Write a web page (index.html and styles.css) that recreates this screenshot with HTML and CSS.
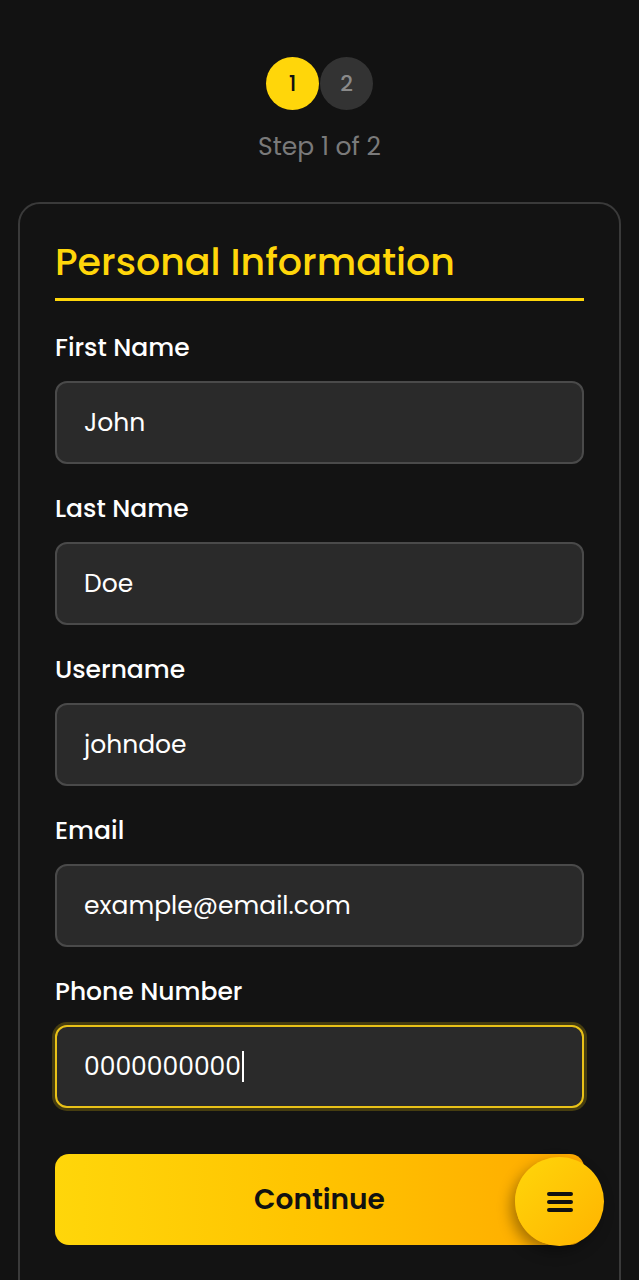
FILE: index.html
```html
<!DOCTYPE html>
<html lang="en">
<head>
<meta charset="utf-8">
<title>Personal Information</title>
<link rel="stylesheet" href="styles.css">
</head>
<body>
<div class="page">
  <div class="stepper">
    <div class="steps">
      <div class="step active">1</div>
      <div class="step">2</div>
    </div>
    <div class="step-label">Step 1 of 2</div>
  </div>
  <section class="card">
    <h1 class="title">Personal Information</h1>
    <div class="field">
      <label class="label">First Name</label>
      <div class="input">John</div>
    </div>
    <div class="field">
      <label class="label">Last Name</label>
      <div class="input">Doe</div>
    </div>
    <div class="field">
      <label class="label">Username</label>
      <div class="input">johndoe</div>
    </div>
    <div class="field">
      <label class="label">Email</label>
      <div class="input">example@email.com</div>
    </div>
    <div class="field">
      <label class="label">Phone Number</label>
      <div class="input focused">0000000000<span class="caret"></span></div>
    </div>
    <div class="actions">
      <button class="continue">Continue</button>
      <button class="fab" aria-label="Menu">
        <svg width="28" height="22" viewBox="0 0 28 22"><path d="M3 3h22M3 11h22M3 19h22" stroke="#111" stroke-width="4" stroke-linecap="round"/></svg>
      </button>
    </div>
  </section>
</div>
</body>
</html>
```
FILE: styles.css
```css
* { box-sizing: border-box; }
html, body { margin: 0; padding: 0; background: #121212; }
body {
  font-family: "Poppins", "Inter", "Noto Sans", sans-serif;
  color: #fff;
  height: 1280px;
  overflow: hidden;
}
.page { padding: 57px 18px 0; }
.stepper { display: flex; flex-direction: column; align-items: center; }
.steps { display: flex; gap: 1px; }
.step {
  width: 53px; height: 53px; border-radius: 50%;
  background: #333333; color: #8a8a8a;
  display: flex; align-items: center; justify-content: center;
  font-size: 22px; font-weight: 500;
}
.step.active { background: #FFD60A; color: #111; }
.step-label { margin-top: 22px; font-size: 25px; color: #7a7a7a; line-height: 30px; }
.card {
  margin-top: 40px;
  border: 2px solid #3a3a3a;
  border-radius: 22px;
  padding: 34px 35px 60px;
  background: #131313;
  height: 1200px;
}
.title {
  margin: 0;
  font-size: 38px; font-weight: 500; color: #FFD60A;
  line-height: 48px;
  padding-bottom: 12px;
  border-bottom: 3px solid #FFD60A;
}
.field { display: flex; flex-direction: column; }
.label { font-size: 25px; font-weight: 500; line-height: 30px; margin-top: 30px; margin-bottom: 18px; }
.field:first-of-type .label { margin-top: 32px; }
.input {
  height: 83px; border: 2px solid #4a4a4a; border-radius: 12px;
  background: #2a2a2a; padding: 0 27px;
  display: flex; align-items: center;
  font-size: 25px; color: #fff;
}
.input.focused { border-color: #E9C218; box-shadow: 0 0 0 3px rgba(255, 214, 10, 0.22); }
.caret { display: inline-block; width: 2px; height: 31px; background: #fff; margin-left: 1px; }
.actions { position: relative; margin-top: 46px; }
.continue {
  width: 100%; height: 91px; border: 0; border-radius: 14px;
  background: linear-gradient(90deg, #FFD60A 0%, #FFC300 50%, #FFAA00 100%);
  font-family: inherit; font-size: 28px; font-weight: 600; color: #111;
}
.fab {
  position: absolute; right: -20px; top: 3px;
  width: 89px; height: 89px; border-radius: 50%; border: 0;
  background: linear-gradient(135deg, #FFD60A 0%, #FFB300 100%);
  box-shadow: -4px 6px 14px rgba(0,0,0,0.35);
  display: flex; align-items: center; justify-content: center;
}
```
